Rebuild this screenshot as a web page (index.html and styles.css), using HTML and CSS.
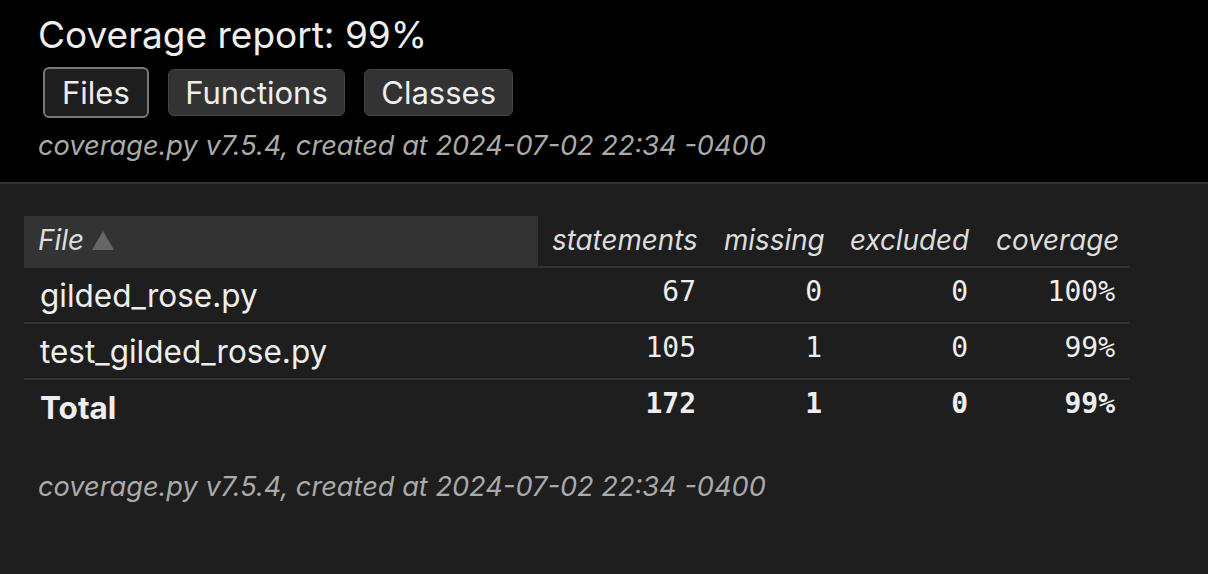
FILE: index.html
```html
<!DOCTYPE html>
<html lang="en">
<head>
<meta charset="utf-8">
<title>Coverage report</title>
<link rel="stylesheet" href="styles.css">
</head>
<body>
<header class="site-header">
  <div class="header-content">
    <h1 class="title">Coverage report: <span class="pc">99%</span></h1>
    <nav class="tabs">
      <a class="button current">Files</a>
      <a class="button">Functions</a>
      <a class="button">Classes</a>
    </nav>
    <p class="meta">coverage.py v7.5.4, created at 2024-07-02 22:34 -0400</p>
  </div>
</header>
<main class="index">
  <table class="report">
    <colgroup>
      <col class="c-name"><col class="c-stm"><col class="c-miss"><col class="c-exc"><col class="c-cov">
    </colgroup>
    <thead>
      <tr>
        <th class="name sorted">File <svg class="arrow" width="22" height="19" viewBox="0 0 22 19"><polygon points="11,0 22,19 0,19" fill="#666"/></svg></th>
        <th>statements</th>
        <th>missing</th>
        <th>excluded</th>
        <th>coverage</th>
      </tr>
    </thead>
    <tbody>
      <tr>
        <td class="name">gilded_rose.py</td>
        <td>67</td><td>0</td><td>0</td><td>100%</td>
      </tr>
      <tr>
        <td class="name">test_gilded_rose.py</td>
        <td>105</td><td>1</td><td>0</td><td>99%</td>
      </tr>
    </tbody>
    <tfoot>
      <tr class="total">
        <td class="name">Total</td>
        <td>172</td><td>1</td><td>0</td><td>99%</td>
      </tr>
    </tfoot>
  </table>
</main>
<footer class="site-footer">
  <p class="meta">coverage.py v7.5.4, created at 2024-07-02 22:34 -0400</p>
</footer>
</body>
</html>
```
FILE: styles.css
```css
html, body { margin: 0; padding: 0; }
body {
  background: #1e1e1e;
  color: #eee;
  font-family: Inter, "Noto Sans", sans-serif;
}
.site-header {
  background: #000;
  border-bottom: 2px solid #333;
}
.header-content {
  padding: 12px 38px 20px 38px;
}
.title {
  margin: 0;
  font-size: 37px;
  line-height: 45px;
  font-weight: 400;
  color: #eee;
}
.tabs {
  display: flex;
  align-items: center;
  gap: 19.5px;
  margin-top: 10px;
  padding-left: 5px;
}
.button {
  display: block;
  font-size: 31px;
  line-height: 39px;
  padding: 3px 16px;
  border: 1px solid #444;
  border-radius: 6px;
  background: #333;
  color: #eee;
  text-decoration: none;
}
.button.current {
  border: 2px solid #777;
  background: #1e1e1e;
  padding: 4px 17px;
}
.meta {
  margin: 0;
  font-size: 27.2px;
  line-height: 32px;
  font-style: italic;
  color: #aaa;
}
.header-content .meta { margin-top: 12px; }

.index { padding: 32px 0 0 24px; }
.report {
  border-collapse: collapse;
  table-layout: fixed;
  width: 1105px;
}
.c-name { width: 514px; }
.c-stm { width: 172px; }
.c-miss { width: 126px; }
.c-exc { width: 146px; }
.c-cov { width: 147px; }

.report th {
  font-family: Inter, "Noto Sans", sans-serif;
  font-style: italic;
  font-weight: 400;
  font-size: 27.8px;
  line-height: 36px;
  color: #ddd;
  text-align: right;
  padding: 6px 14px 8px 14px;
  border-bottom: 2px solid #333;
  white-space: nowrap;
}
.report th.name { text-align: left; }
.report th.sorted { background: #333; }
.arrow { vertical-align: baseline; margin-left: 0; }

.report td {
  font-family: "DejaVu Sans Mono", monospace;
  font-size: 28px;
  line-height: 32px;
  text-align: right;
  vertical-align: top;
  padding: 8px 14px 14px 14px;
  color: #eee;
}
.report tbody tr { border-bottom: 2px solid #333; }
.report td.name {
  font-family: Inter, "Noto Sans", sans-serif;
  font-size: 31.5px;
  line-height: 40px;
  text-align: left;
  padding: 8px 14px 6px 16px;
}
.report tr.total td { font-weight: 700; }
.report tr.total td.name { padding-top: 8px; padding-bottom: 7px; }

.site-footer { padding: 36px 38px 0 38px; }
```
